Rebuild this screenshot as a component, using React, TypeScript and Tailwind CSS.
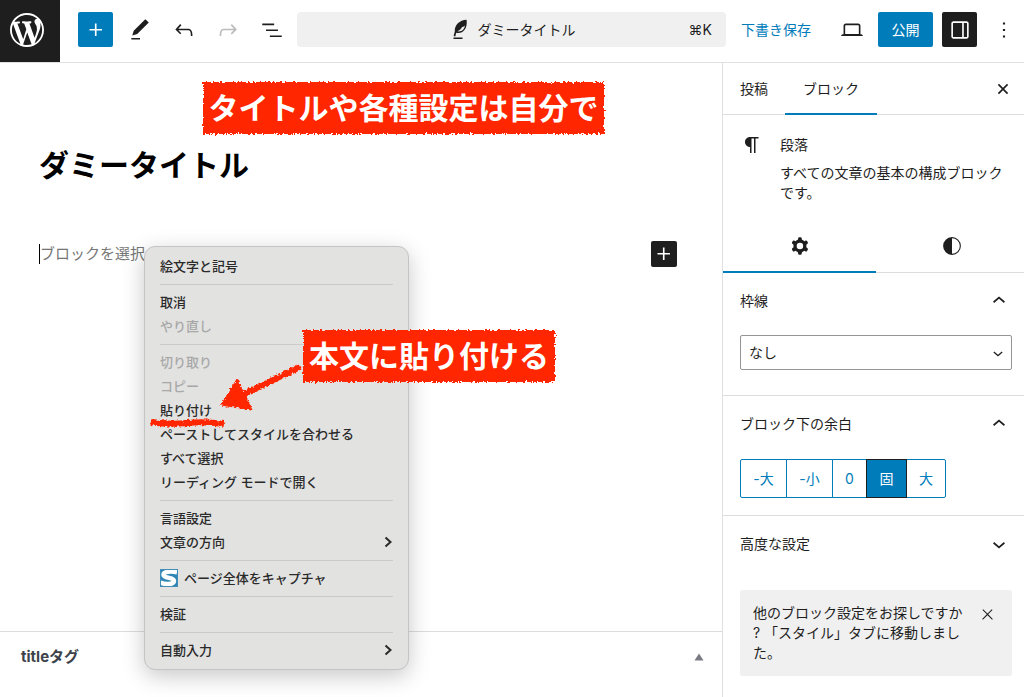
import type { ReactNode } from "react"
import clsx from "clsx"

const icons = {
  plus: "M11 12.5V17.5H12.5V12.5H17.5V11H12.5V6H11V11H6V12.5H11Z",
  edit: "M20.1 5.1L16.9 2 6.2 12.7l-1.3 4.4 4.5-1.3L20.1 5.1zM4 20.8h8v-1.5H4v1.5z",
  undo: "M18.3 11.7c-.6-.6-1.4-.9-2.3-.9H6.7l2.9-3.3-1.1-1-4.5 5L8.5 16l1-1-2.7-2.7H16c.5 0 .9.2 1.3.5 1 1 1 3.4 1 4.5v.3h1.5v-.2c0-1.5 0-4.3-1.5-5.7z",
  redo: "M15.6 6.5l-1.1 1 2.9 3.3H8c-.9 0-1.7.3-2.3.9-1.4 1.5-1.4 4.2-1.4 5.6v.2h1.5v-.3c0-1.1 0-3.5 1-4.5.3-.3.7-.5 1.3-.5h9.2L14.5 15l1.1 1.1 4.6-4.6-4.6-5z",
  list: "M3 6h11v1.5H3V6Zm3.5 5.5h11V13h-11v-1.5ZM21 17H10v1.5h11V17Z",
  laptop: "M20.5 16h-.7V8c0-1.1-.9-2-2-2H6.2c-1.1 0-2 .9-2 2v8h-.7c-.8 0-1.5.7-1.5 1.5h20c0-.8-.7-1.5-1.5-1.5zM5.7 8c0-.3.2-.5.5-.5h11.6c.3 0 .5.2.5.5v7.6H5.7V8z",
  drawer: "M18 4H6c-1.1 0-2 .9-2 2v12c0 1.1.9 2 2 2h12c1.1 0 2-.9 2-2V6c0-1.1-.9-2-2-2zm-4 14.5H6c-.3 0-.5-.2-.5-.5V6c0-.3.2-.5.5-.5h8v13zm4.5-.5c0 .3-.2.5-.5.5h-2.5v-13H18c.3 0 .5.2.5.5v12z",
  more: "M13 19h-2v-2h2v2zm0-6h-2v-2h2v2zm0-6h-2V5h2v2z",
  close: "M12 13.06l3.712 3.713 1.061-1.06L13.061 12l3.712-3.712-1.06-1.06L12 10.938 8.288 7.227l-1.061 1.06L10.939 12l-3.712 3.712 1.06 1.061L12 13.061z",
  closeThin: "M13 11.8l6.1-6.3-1-1-6.1 6.2-6.1-6.2-1 1 6.1 6.3-6.500 6.700 1 1 6.500-6.600 6.500 6.600 1-1z",
  up: "M6.500 12.500L12 7.800l5.500 4.700-1 1.300L12 10l-4.500 3.800-1-1.300z",
  down: "M17.500 11.500L12 16.200l-5.500-4.700 1-1.300L12 14l4.500-3.800 1 1.300z",
  paragraph: "m9.99609 14v-.2251l.00391.0001v6.225h1.5v-14.5h2.5v14.5h1.5v-14.5h3v-1.5h-8.50391c-2.76142 0-5 2.23858-5 5 0 2.7614 2.23858 5 5 5z",
  cog: "M10.289 4.836A1 1 0 0111.275 4h1.306a1 1 0 01.987.836l.244 1.466c.787.26 1.503.679 2.108 1.218l1.393-.522a1 1 0 011.216.437l.653 1.13a1 1 0 01-.23 1.273l-1.148.944a6.025 6.025 0 010 2.435l1.149.946a1 1 0 01.23 1.272l-.653 1.13a1 1 0 01-1.216.437l-1.394-.522c-.605.54-1.32.958-2.108 1.218l-.244 1.466a1 1 0 01-.987.836h-1.306a1 1 0 01-.986-.836l-.244-1.466a5.995 5.995 0 01-2.108-1.218l-1.394.522a1 1 0 01-1.217-.436l-.653-1.131a1 1 0 01.23-1.272l1.149-.946a6.026 6.026 0 010-2.435l-1.148-.944a1 1 0 01-.23-1.272l.653-1.131a1 1 0 011.217-.437l1.393.522a5.994 5.994 0 012.108-1.218l.244-1.466zM14.929 12a3 3 0 11-6 0 3 3 0 016 0z",
  styles: "M20.2 12a8.2 8.2 0 1 1-16.4 0 8.2 8.2 0 0 1 16.4 0Zm-1 0a7.2 7.2 0 0 1-7.2 7.2v-14.4a7.2 7.2 0 0 1 7.2 7.2Z",
}

const Icon = ({ name, size = 26, className }: { name: keyof typeof icons; size?: number; className?: string }) => (
  <svg viewBox="0 0 24 24" width={size} height={size} fill="currentColor" fillRule="evenodd" className={clsx("shrink-0", className)} aria-hidden="true">
    <path d={icons[name]} />
  </svg>
)

const WordPressLogo = () => (
  <svg viewBox="0 0 20 20" width="34" height="34" fill="#fff" aria-hidden="true">
    <path d="M20 10c0-5.51-4.49-10-10-10C4.48 0 0 4.49 0 10c0 5.52 4.48 10 10 10 5.51 0 10-4.48 10-10zM7.78 15.37L4.37 6.22c.55-.02 1.17-.08 1.17-.08.5-.06.44-1.13-.06-1.11 0 0-1.45.11-2.37.11-.18 0-.37 0-.58-.01C4.12 2.69 6.87 1.11 10 1.11c2.33 0 4.45.87 6.05 2.34-.68-.11-1.65.39-1.65 1.58 0 .74.45 1.36.9 2.1.35.61.55 1.36.55 2.46 0 1.49-1.4 5-1.4 5l-3.03-8.37c.54-.02.82-.17.82-.17.5-.05.44-1.25-.06-1.22 0 0-1.44.12-2.38.12-.87 0-2.33-.12-2.33-.12-.5-.03-.56 1.2-.06 1.22l.92.08 1.26 3.41zM17.41 10c.24-.64.74-1.87.43-4.25.7 1.29 1.05 2.71 1.05 4.25 0 3.29-1.73 6.24-4.4 7.78.97-2.59 1.94-5.2 2.92-7.78zM6.1 18.09C3.12 16.65 1.11 13.53 1.11 10c0-1.3.23-2.48.72-3.59C3.25 10.3 4.67 14.2 6.1 18.09zm4.03-6.63l2.58 6.98c-.86.29-1.76.45-2.71.45-.79 0-1.57-.11-2.29-.33.81-2.38 1.62-4.74 2.42-7.1z" />
  </svg>
)

const Feather = () => (
  <svg viewBox="0 0 26 26" width="26" height="26" aria-hidden="true">
    <path fill="#1e1e1e" fillRule="evenodd" d="M18.600 2.800C11.500 3.200 6.400 8 6.800 14.500L5.600 19l1.700.4.900-3.600c6.200 1.300 11.600-3.200 10.400-13zM9.200 14.300c2.600-1.200 4-2.600 4.900-4.400 1 .3 1.900-.4 2.700-1.400-.1 3.600-3 6.500-7.600 5.800z" />
    <path fill="#1e1e1e" d="M5.500 20.500h9V22h-9z" />
  </svg>
)

const CaptureLogo = () => (
  <svg viewBox="0 0 18 18" width="18" height="18" aria-hidden="true">
    <path fill="#2f86b5" d="M0 0h18v18H0z" />
    <path fill="none" stroke="#fff" strokeWidth="4.500" d="M17 3.200C11 2 3.500 2.400 3.500 5.700c0 4 10.500 2.300 10.500 6 0 3.800-8.500 4.300-13.500 1.800" />
    <path fill="none" stroke="#3f8db8" d="M.5.5h17v17H.5z" />
  </svg>
)

type ToolProps = { label: string; className?: string; children: ReactNode }

const Tool = ({ label, className, children }: ToolProps) => (
  <button type="button" aria-label={label} className={clsx("flex h-[35px] w-[35px] shrink-0 items-center justify-center rounded-xs", className)}>
    {children}
  </button>
)

const Header = () => (
  <header className="flex h-[63px] items-center border-b border-[#e0e0e0] pr-[3px] pb-[3px]">
    <a href="#" aria-label="WordPress" className="flex h-[62px] w-[60px] shrink-0 items-center self-start bg-[#1e1e1e] pb-[3px] pl-[10px]">
      <WordPressLogo />
    </a>
    <div className="flex gap-[9px] pr-2 pl-[18px]">
      <Tool label="追加" className="bg-[#007cba] text-white"><Icon name="plus" /></Tool>
      <Tool label="編集"><Icon name="edit" /></Tool>
      <Tool label="元に戻す"><Icon name="undo" /></Tool>
      <Tool label="やり直す" className="text-[#bbb]"><Icon name="redo" /></Tool>
      <Tool label="リスト"><Icon name="list" /></Tool>
    </div>
    <button type="button" className="grid h-[35px] flex-1 grid-cols-[1fr_auto_1fr] items-center rounded bg-[#f0f0f0] px-[14px]">
      <span className="col-start-2 flex items-center gap-1">
        <Feather />
        ダミータイトル
      </span>
      <span className="text-right">⌘K</span>
    </button>
    <div className="flex gap-[9px]">
      <button type="button" className="pr-[14px] pl-[15px] text-[#007cba]">下書き保存</button>
      <Tool label="表示"><Icon name="laptop" /></Tool>
      <button type="button" className="h-[35px] w-[55px] rounded-xs bg-[#007cba] text-white">公開</button>
      <Tool label="設定" className="bg-[#1e1e1e] text-white"><Icon name="drawer" /></Tool>
      <Tool label="オプション"><Icon name="more" /></Tool>
    </div>
  </header>
)

type MenuEntry = { label: string; disabled?: boolean; submenu?: boolean; logo?: boolean }

const menuGroups: MenuEntry[][] = [
  [{ label: "絵文字と記号" }],
  [{ label: "取消" }, { label: "やり直し", disabled: true }],
  [
    { label: "切り取り", disabled: true },
    { label: "コピー", disabled: true },
    { label: "貼り付け" },
    { label: "ペーストしてスタイルを合わせる" },
    { label: "すべて選択" },
    { label: "リーディング モードで開く" },
  ],
  [{ label: "言語設定" }, { label: "文章の方向", submenu: true }],
  [{ label: "ページ全体をキャプチャ", logo: true }],
  [{ label: "検証" }],
  [{ label: "自動入力", submenu: true }],
]

const ContextMenu = () => (
  <div role="menu" className="absolute top-[246px] left-[144px] w-[265px] rounded-[11px] border border-[#c4c4c4] bg-[#e2e2e1] px-[15px] py-[7px] text-[13px] leading-6 font-medium text-[#2a2a2a] shadow-[0_6px_22px_rgba(0,0,0,0.22)]">
    {menuGroups.map((group, i) => (
      <div key={i}>
        {i > 0 && <div className="flex h-3 items-center"><hr className="flex-1 border-[#cbcbcb]" /></div>}
        {group.map((item) => (
          <button
            key={item.label}
            type="button"
            role="menuitem"
            disabled={item.disabled}
            className="flex h-6 w-full items-center gap-[6px] text-left disabled:text-[#a8a8a8]"
          >
            {item.logo && <CaptureLogo />}
            <span className="flex-1">{item.label}</span>
            {item.submenu && (
              <svg viewBox="0 0 10 12" width="10" height="12" fill="none" stroke="currentColor" strokeWidth="2" aria-hidden="true">
                <path d="M2.500 1.500 7.500 6l-5 4.500" />
              </svg>
            )}
          </button>
        ))}
      </div>
    ))}
  </div>
)

const Callout = ({ className, children }: { className: string; children: ReactNode }) => (
  <p className={clsx("absolute flex h-[52px] items-center justify-center text-[30px] leading-none font-bold whitespace-nowrap text-white", className)}>
    <span className="absolute inset-0 bg-[#ff2600] [filter:url(#rough)]" />
    <span className="relative">{children}</span>
  </p>
)

// Hand-drawn arrow and underline laid over the menu
const Marks = () => (
  <svg width="170" height="80" viewBox="145 355 170 80" className="pointer-events-none absolute top-[355px] left-[145px]" aria-hidden="true">
    <defs>
      <filter id="rough" x="-5%" y="-10%" width="110%" height="120%">
        <feTurbulence type="fractalNoise" baseFrequency="0.4" numOctaves="2" seed="4" result="noise" />
        <feDisplacementMap in="SourceGraphic" in2="noise" scale="5" xChannelSelector="R" yChannelSelector="G" />
      </filter>
    </defs>
    <g filter="url(#rough)" fill="#ff2600" stroke="#ff2600">
      <path d="M300 367 238 397" strokeWidth="6" />
      <path d="M221 405 237 379 252 410z" strokeWidth="1" />
      <path d="M151 422q18 3 36 1t37 1" fill="none" strokeWidth="6" />
    </g>
  </svg>
)

const Editor = () => (
  <main className="flex min-w-0 flex-1 flex-col">
    <div className="flex-1 px-[39px] pt-20">
      <h1 className="text-[30px] leading-[44px] font-bold text-black">ダミータイトル</h1>
      <div className="mt-[53px] flex h-[27px] items-center justify-between pr-[6px]">
        <p className="border-l border-black text-[15px] leading-5 text-[#757575]">ブロックを選択</p>
        <button type="button" aria-label="ブロックを追加" className="flex h-[26px] w-[26px] items-center justify-center rounded-xs bg-[#1e1e1e] text-white">
          <Icon name="plus" />
        </button>
      </div>
    </div>
    <section className="flex h-[66px] items-start justify-between border-t border-[#ddd] pt-[15px] pr-[18px] pl-[21px]">
      <h2 className="text-[15px] leading-5 font-bold text-[#3c434a]">titleタグ</h2>
      <button type="button" aria-label="パネルを切り替え" className="flex h-5 items-center">
        <svg viewBox="0 0 10 8" width="10" height="8" fill="#787c82"><path d="M5 0.500 9.500 7.500h-9z" /></svg>
      </button>
    </section>
  </main>
)

const PanelTitle = ({ open, children }: { open?: boolean; children: ReactNode }) => (
  <h2>
    <button type="button" aria-expanded={!!open} className="flex h-[55px] w-full items-center justify-between">
      {children}
      <Icon name={open ? "up" : "down"} />
    </button>
  </h2>
)

const spacings = [
  { label: "-大", width: "w-[47px]" },
  { label: "-小", width: "w-[47px]" },
  { label: "0", width: "w-[35px]" },
  { label: "固", width: "w-[41px]", active: true },
  { label: "大", width: "w-[40px]" },
]

const Sidebar = () => (
  <aside className="w-[302px] shrink-0 border-l border-[#e0e0e0]">
    <div className="flex h-[52px] items-center border-b border-[#ddd]">
      <button type="button" className="h-[52px] px-[17px]">投稿</button>
      <button type="button" className="h-[52px] border-y-2 border-t-transparent border-b-[#007cba] px-[18px]">ブロック</button>
      <Tool label="閉じる" className="mr-1 ml-auto"><Icon name="close" /></Tool>
    </div>

    <div className="flex gap-4 pt-5 pr-3 pb-[17px] pl-[17px]">
      <Icon name="paragraph" size={24} className="-mt-0.5" />
      <div>
        <h2>段落</h2>
        <p className="mt-2">すべての文章の基本の構成ブロックです。</p>
      </div>
    </div>

    <div className="grid h-[53px] grid-cols-[153px_1fr] border-b border-[#ddd]">
      <button type="button" aria-label="設定" className="-mb-px flex items-center justify-center border-b-2 border-[#007cba]">
        <Icon name="cog" />
      </button>
      <button type="button" aria-label="スタイル" className="flex items-center justify-center pl-1"><Icon name="styles" /></button>
    </div>

    <section className="border-b border-[#ddd] pr-3 pb-[25px] pl-[17px]">
      <PanelTitle open>枠線</PanelTitle>
      <div className="relative mt-[7px]">
        <select aria-label="枠線" className="h-[35px] w-full appearance-none rounded-xs border border-[#949494] bg-white px-2">
          <option>なし</option>
        </select>
        <Icon name="down" size={20} className="pointer-events-none absolute top-2 right-1" />
      </div>
    </section>

    <section className="border-b border-[#ddd] pr-3 pb-[17px] pl-[17px]">
      <PanelTitle open>ブロック下の余白</PanelTitle>
      <div className="mt-2 flex text-[#007cba]">
        {spacings.map((s) => (
          <button
            key={s.label}
            type="button"
            className={clsx(
              "-mr-px h-[39px] border first:rounded-l-xs last:rounded-r-xs",
              s.width,
              s.active ? "relative border-[#1e1e1e] bg-[#007cba] text-white" : "border-[#007cba]"
            )}
          >
            {s.label}
          </button>
        ))}
      </div>
    </section>

    <section className="pr-3 pb-5 pl-[17px]">
      <PanelTitle>高度な設定</PanelTitle>
      <div className="mt-[19px] flex items-start rounded-xs bg-[#f0f0f0] py-[13px] pr-4 pl-[13px]">
        <p className="flex-1 whitespace-nowrap">
          他のブロック設定をお探しですか
          <br />
          ? 「スタイル」タブに移動しまし
          <br />
          た。
        </p>
        <button type="button" aria-label="閉じる" className="flex h-[22px] items-center">
          <Icon name="closeThin" size={17} />
        </button>
      </div>
    </section>
  </aside>
)

const App = () => {
  return (
    <div className="relative flex min-h-screen flex-col bg-white font-[Inter,'Noto_Sans_CJK_JP',sans-serif] text-sm text-[#1e1e1e]">
      <Header />
      <div className="flex flex-1">
        <Editor />
        <Sidebar />
      </div>
      <ContextMenu />
      <Marks />
      <Callout className="top-[82px] left-[203px] w-[401px]">タイトルや各種設定は自分で</Callout>
      <Callout className="top-[330px] left-[303px] w-[252px]">本文に貼り付ける</Callout>
    </div>
  )
}

export default App
